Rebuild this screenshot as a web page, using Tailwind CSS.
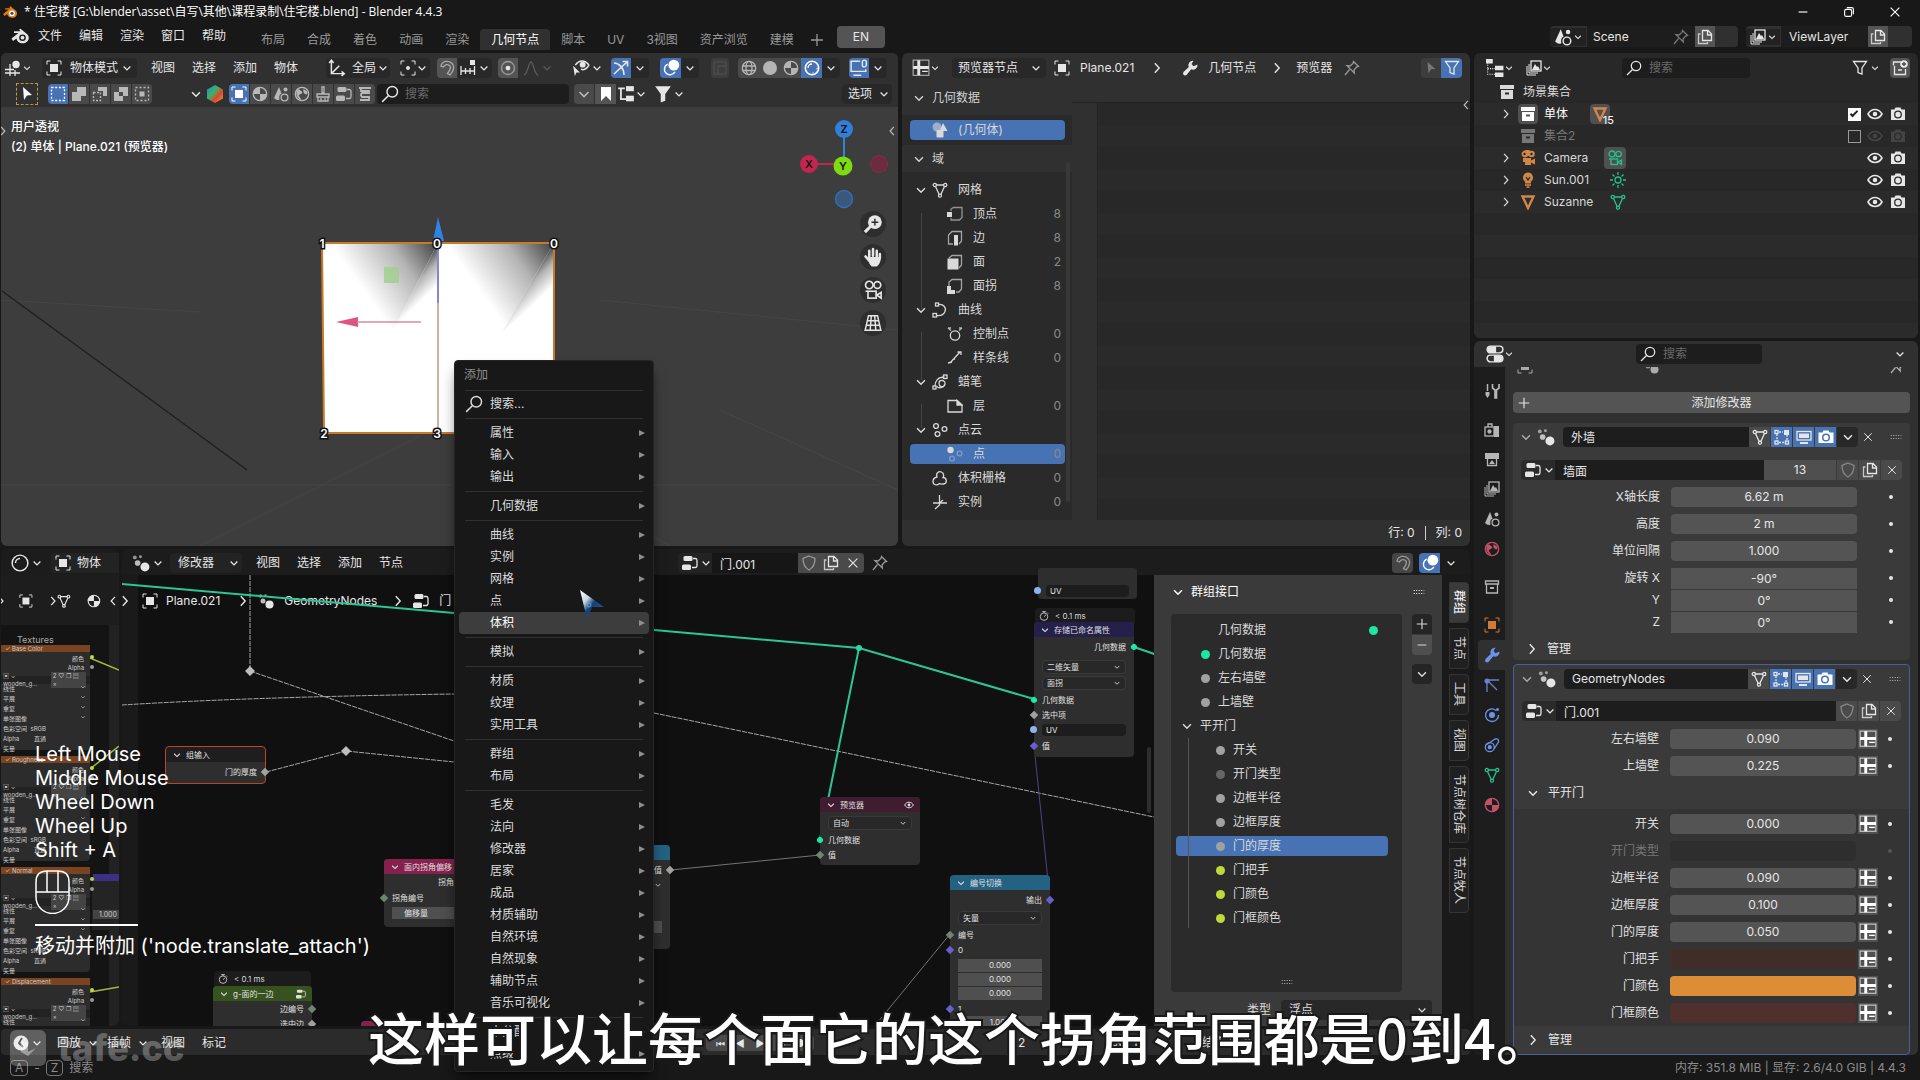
<!DOCTYPE html>
<html lang="zh-CN">
<head>
<meta charset="utf-8">
<title>住宅楼.blend - Blender 4.4.3</title>
<script src="https://cdn.jsdelivr.net/npm/@tailwindcss/browser@4"></script>
</head>
<body class="relative flex h-screen flex-col overflow-hidden bg-[#181818] font-[family-name:Inter,'Noto_Sans_CJK_SC',sans-serif] text-xs leading-4 text-[#d9d9d9] [&_use]:fill-none [&_use]:stroke-current [&_use]:stroke-[1.3px]">

<!-- icon sprite: line icons take their stroke from the use element -->
<svg class="hidden" aria-hidden="true">
<symbol id="chev" viewBox="0 0 16 16"><path d="M3.500 6l4.500 4.500L12.500 6" stroke-width="1.700"/></symbol>
<symbol id="right" viewBox="0 0 16 16"><path d="M5.500 2.500L10.500 8l-5 5.500" stroke-width="1.600"/></symbol>
<symbol id="left" viewBox="0 0 16 16"><path d="M10.500 2.500L5.500 8l5 5.500" stroke-width="1.600"/></symbol>
<symbol id="plus" viewBox="0 0 16 16"><path d="M8 2v12M2 8h12"/></symbol>
<symbol id="minus" viewBox="0 0 16 16"><path d="M3 8h10"/></symbol>
<symbol id="x" viewBox="0 0 16 16"><path d="M3 3l10 10M13 3L3 13"/></symbol>
<symbol id="restore" viewBox="0 0 16 16"><rect x="3" y="5" width="8" height="8" rx="2"/><path d="M5.500 3H11a2 2 0 012 2v5.500"/></symbol>
<symbol id="search" viewBox="0 0 16 16"><circle cx="10" cy="6" r="4.700"/><path d="M6.500 9.500L1 15"/></symbol>
<symbol id="obj" viewBox="0 0 16 16"><rect x="4" y="4" width="8" height="8" fill="currentColor" stroke="none"/><path d="M1 4.500V1h3.500M11.500 1H15v3.500M15 11.500V15h-3.500M4.500 15H1v-3.500" stroke-width="1"/></symbol>
<symbol id="ed3d" viewBox="0 0 16 16"><circle cx="11" cy="4.500" r="3.700" fill="currentColor" stroke="none"/><path d="M5 4v12M0 9.500h9M0 13h15M10 10v6" /></symbol>
<symbol id="axes" viewBox="0 0 16 16"><path d="M3 1v12h11M3 13L10 6M1 3.500L3 1l2 2.500M12 11l2.500 2-2.500 2"/></symbol>
<symbol id="pivot" viewBox="0 0 16 16"><circle cx="8" cy="8" r="1.300" fill="currentColor"/><path d="M1 4.500V1h3.500M11.500 1H15v3.500M15 11.500V15h-3.500M4.500 15H1v-3.500" stroke-width="1"/></symbol>
<symbol id="magnet" viewBox="0 0 16 16"><path d="M2 6C3 1 10-.5 13.500 4c2 3 1 7-2.500 11l-2.500-1.500C11.500 9.500 12 7.500 11 6 9 3.500 5.500 4.500 4.500 7z"/></symbol>
<symbol id="snap" viewBox="0 0 16 16"><path d="M1 6v9M1 11h14M5.500 8v6M10 8v6M14.500 6v9"/><rect x="10" y="0" width="5" height="5" fill="currentColor" stroke="none"/></symbol>
<symbol id="prop" viewBox="0 0 16 16"><circle cx="8" cy="8" r="6.500" opacity=".5"/><circle cx="8" cy="8" r="1.700" fill="currentColor"/></symbol>
<symbol id="bell" viewBox="0 0 16 16"><path d="M1 15C5 14 5.500 2 8 2s3 12 7 13"/></symbol>
<symbol id="eyecur" viewBox="0 0 16 16"><path d="M3 5.500C6 .5 12 .5 15 5.500c-3 5-6 4-7 3.500"/><circle cx="9.500" cy="5" r="2" fill="currentColor"/><path d="M1 6l6 6H4l-1.500 3z" fill="currentColor" stroke="none"/></symbol>
<symbol id="gizmo" viewBox="0 0 16 16"><path d="M1 14L14 2M9.500 1.500H14.500V6.500M1 3c5 0 10 5 10 12" stroke-width="1.600"/></symbol>
<symbol id="overlay" viewBox="0 0 16 16"><circle cx="10.500" cy="5.500" r="4.800" fill="currentColor" stroke="none"/><path d="M5 4.500A5 5 0 1011.500 11.500"/></symbol>
<symbol id="xray" viewBox="0 0 16 16"><rect x="2" y="2" width="12" height="12"/><path d="M6 6h8M6 6v8"/></symbol>
<symbol id="wire" viewBox="0 0 16 16"><circle cx="8" cy="8" r="6.700"/><ellipse cx="8" cy="8" rx="3" ry="6.700"/><path d="M1.500 6h13M1.500 10.500h13"/></symbol>
<symbol id="solid" viewBox="0 0 16 16"><circle cx="8" cy="8" r="7" fill="currentColor" stroke="none"/></symbol>
<symbol id="matprev" viewBox="0 0 16 16"><circle cx="8" cy="8" r="6.700"/><path d="M8 1.300A6.700 6.700 0 001.300 8H8zM8 8v6.700A6.700 6.700 0 0014.700 8z" fill="currentColor" stroke="none"/></symbol>
<symbol id="rend" viewBox="0 0 16 16"><circle cx="8" cy="8" r="6.700" stroke-width="1.600"/><path d="M4 8a4 4 0 014-4" /><path d="M12 12l1 1M13.500 8.500h-1M9 13.500v-1"/></symbol>
<symbol id="monlink" viewBox="0 0 16 16"><path d="M9 2H1v9h13V9M3 14.500h7"/><rect x="11" y="1" width="3.500" height="6" rx="1.700"/></symbol>
<symbol id="cursor" viewBox="0 0 16 16"><path d="M4 1l9 8-5 .5L5 14z" fill="currentColor" stroke="none"/></symbol>
<symbol id="selnew" viewBox="0 0 16 16"><rect x="1.500" y="1.500" width="13" height="13" stroke-dasharray="2 1.700"/></symbol>
<symbol id="seladd" viewBox="0 0 16 16"><path d="M6 1h9v9h-5v5H1V6h5z" fill="currentColor" stroke="none"/></symbol>
<symbol id="selsub" viewBox="0 0 16 16"><path d="M6 1h9v9h-4V5H6z" fill="currentColor" stroke="none"/><path d="M1.500 6.500h7v8h-7z" stroke-dasharray="2 1.500"/></symbol>
<symbol id="selinv" viewBox="0 0 16 16"><path d="M6 1h9v9h-5v5H1V6h5zM6 6v4h4V6z" fill="currentColor" fill-rule="evenodd" stroke="none"/></symbol>
<symbol id="selint" viewBox="0 0 16 16"><rect x="5.500" y="5.500" width="5" height="5" fill="currentColor" stroke="none"/><rect x="1.500" y="1.500" width="13" height="13" stroke-dasharray="2 2"/></symbol>
<symbol id="scene" viewBox="0 0 16 16"><path d="M6 1L1 12q3 3 5.500 1.500Q5.500 9 8.500 7.500z" fill="currentColor" stroke="none"/><circle cx="11.500" cy="11.500" r="3.400"/><circle cx="12.500" cy="3.500" r="2" fill="currentColor" stroke="none"/></symbol>
<symbol id="world" viewBox="0 0 16 16"><circle cx="8" cy="8" r="6.700"/><path d="M3 4c2-1 3 0 4 1s2 0 1 2-4 1-3 3 2 2 2 4C4 13 1 9 3 4zM10 2c0 2 1 2 3 3 1 3 0 4-2 3s-2-4-1-6z" fill="currentColor" stroke="none"/></symbol>
<symbol id="brush" viewBox="0 0 16 16"><path d="M7 1h2v6h-2zM2 8h12v3H2zM3 11v4h10v-4M6 12v3M10 12v3"/></symbol>
<symbol id="nodetree" viewBox="0 0 16 16"><rect x="1.500" y="1" width="9" height="5" rx="1.500" fill="currentColor" stroke="none"/><rect x="0" y="9.500" width="9" height="5.500" rx="1.500" fill="currentColor" stroke="none"/><path d="M11 3.500h2.500q1.500 0 1.500 2v5q0 2-1.500 2H10"/></symbol>
<symbol id="stack" viewBox="0 0 16 16"><path d="M2 2h12M4 2v3h8v2H5q-2 2 0 4h7v3H3" stroke-width="1.800"/></symbol>
<symbol id="bookmark" viewBox="0 0 16 16"><path d="M3 1h10v14l-5-5-5 5z" fill="currentColor" stroke="none"/></symbol>
<symbol id="tree" viewBox="0 0 16 16"><path d="M1 3h6M3.500 3v9.500H8" stroke-width="1.600"/><rect x="8" y="1" width="7" height="4.500" fill="currentColor" stroke="none"/><rect x="8" y="9.500" width="7" height="5" fill="currentColor" stroke="none"/></symbol>
<symbol id="outl" viewBox="0 0 16 16"><path d="M1.500 3v10.500H9M1.500 8.500H9" stroke-width="1" stroke-dasharray="1 1"/><rect x="0" y="0" width="6" height="4" fill="currentColor" stroke="none"/><rect x="8" y="6" width="7.500" height="4" fill="currentColor" stroke="none"/><rect x="8" y="12" width="7.500" height="4" fill="currentColor" stroke="none"/></symbol>
<symbol id="funnel" viewBox="0 0 16 16"><path d="M1 1h14L10 8v6l-4 1.500V8z" fill="currentColor" stroke="none"/></symbol>
<symbol id="funnelo" viewBox="0 0 16 16"><path d="M1.500 1.500h13L10 8v6l-4-1.500V8z"/></symbol>
<symbol id="zoom" viewBox="0 0 16 16"><circle cx="9.500" cy="6.500" r="5.500" fill="currentColor" stroke="none"/><path d="M6 10l-4.500 4.500" stroke-width="2.500"/><path d="M9.500 3.800v5.400M6.800 6.500h5.400" stroke="#2b2b2b" stroke-width="1.200"/></symbol>
<symbol id="hand" viewBox="0 0 16 16"><path d="M5 8V3M8 7V1.500M11 8V3M13.500 9V5.500M2 7.500L5 11" stroke-width="2" stroke-linecap="round"/><path d="M4 8h10.300c0 4-1.500 6.500-3.300 7.500H7C5 14 4 11 4 8z" fill="currentColor" stroke="none"/></symbol>
<symbol id="cam" viewBox="0 0 16 16"><circle cx="5" cy="4" r="3"/><circle cx="11.500" cy="4" r="2.700"/><rect x="4" y="9" width="6.500" height="5.500"/><path d="M2 9h2M11 12l3.500-2v4.500z" /></symbol>
<symbol id="camf" viewBox="0 0 16 16"><path d="M5 .5a3.500 3.500 0 103 5.500A3.300 3.300 0 105 .5zM3 8h8v2.500L15 8.500v6l-4-2V15H5v-3H3z" fill="currentColor" stroke="none"/><circle cx="11.500" cy="4" r="3.300" fill="currentColor" stroke="none"/><circle cx="4.500" cy="4" r="1.200" fill="#282828" stroke="none"/><circle cx="11.500" cy="4" r="1.200" fill="#282828" stroke="none"/></symbol>
<symbol id="gridp" viewBox="0 0 16 16"><path d="M4 1.500h8l3 13H1zM6.500 1.500l-1 13M9.500 1.500l1 13M3 6h10M2 10h12"/></symbol>
<symbol id="sheet" viewBox="0 0 16 16"><rect x="1" y="1" width="14" height="13.500" stroke-width="1" opacity=".7"/><path d="M6 1v13.500M1 7.500h14" stroke-width="2.600"/><path d="M9 11h5" /></symbol>
<symbol id="wrench" viewBox="0 0 16 16"><path d="M15.500 4.500a4.500 4.500 0 01-6.300 4.700L4.500 15q-2 1-3-.2T1.500 12l5.300-5A4.500 4.500 0 0111.500.7L9.500 4l2 2.300z" fill="currentColor" stroke="none"/></symbol>
<symbol id="pin" viewBox="0 0 16 16"><path d="M9.500 1.500l5 5-2 .5-2.500 3 .3 3L3 5.700l3 .3 3-2.500zM5.500 9.500l-4.500 5.500"/></symbol>
<symbol id="geo" viewBox="0 0 16 16"><circle cx="5" cy="5" r="4.500" fill="currentColor" opacity=".6" stroke="none"/><path d="M11 1l4.500 8h-8z" fill="currentColor" stroke="none"/><rect x="4.500" y="8" width="7" height="7.500" rx="1" fill="currentColor" stroke="none"/></symbol>
<symbol id="mesh" viewBox="0 0 16 16"><path d="M4 3h8M3.500 4.500l3.700 8M12.500 4.500l-3.700 8"/><circle cx="2.800" cy="3" r="1.600"/><circle cx="13.200" cy="3" r="1.600"/><circle cx="8" cy="13.700" r="1.500"/></symbol>
<symbol id="vert" viewBox="0 0 16 16"><path d="M4 5V3l2.500-1.500H15v10L12.500 14H4v-2" opacity=".6"/><rect x="0" y="6" width="5" height="5" fill="currentColor" stroke="none"/></symbol>
<symbol id="edge" viewBox="0 0 16 16"><path d="M6 14H1.500V5L5 1.500h9.500V11L12 14" opacity=".7"/><rect x="7" y="5" width="4" height="10.500" fill="currentColor" stroke="none"/></symbol>
<symbol id="face" viewBox="0 0 16 16"><path d="M2 4l3-2.500h9.500V11L12 14" opacity=".7"/><rect x="0.500" y="4.500" width="11" height="11" fill="currentColor" stroke="none"/></symbol>
<symbol id="corner" viewBox="0 0 16 16"><path d="M2 8V4l3-2.500h9.500V11L12 14H9" opacity=".7"/><path d="M0 8h4v4h4v4H0z" fill="currentColor" stroke="none"/></symbol>
<symbol id="curve" viewBox="0 0 16 16"><path d="M6.500 2.500C12 2 14.500 6 13 9.500S8 14 4.500 13.500"/><rect x="3.500" y="1" width="3" height="3"/><rect x="1" y="11.500" width="3.500" height="3.500"/></symbol>
<symbol id="cpt" viewBox="0 0 16 16"><circle cx="8" cy="9.500" r="4.700"/><path d="M4 4.500L1 2M12 4.500L15 2M1 2h3M12 2h3" opacity=".8"/></symbol>
<symbol id="spline" viewBox="0 0 16 16"><path d="M3 13L13 2M10.500 2H14v3M1 13l4-1M8 9l-3 1"/></symbol>
<symbol id="gp" viewBox="0 0 16 16"><path d="M3 12C3 7 6 3 12.500 3M5 12c0 3 7 2 8-2s-6-5-6-1 3 4 5 3"/><rect x="11.500" y="1" width="3.500" height="3.500"/><rect x="1" y="12" width="3" height="3"/></symbol>
<symbol id="layer" viewBox="0 0 16 16"><path d="M1 2.500h9L15 7v7H1z"/><path d="M10 2.500V7h5z" fill="currentColor"/></symbol>
<symbol id="cloud" viewBox="0 0 16 16"><circle cx="4" cy="4" r="2.400"/><circle cx="12.500" cy="7" r="2.400"/><circle cx="5.500" cy="12" r="2.400"/></symbol>
<symbol id="cloudp" viewBox="0 0 16 16"><circle cx="3.500" cy="4" r="3.200" fill="currentColor" stroke="none"/><g opacity=".4"><circle cx="12.500" cy="7.500" r="2.400"/><circle cx="5" cy="12.500" r="2.400"/></g></symbol>
<symbol id="vol" viewBox="0 0 16 16"><path d="M5 7C3.500 3 7 .8 9.500 2s2.500 4 1.500 5.500c4 0 4.500 6 .5 6.500-2 .3-3 .3-4-.5C5 16 1 15 1 11.500 1 9 3 7.500 5 7z"/></symbol>
<symbol id="inst" viewBox="0 0 16 16"><path d="M7.500 1v10L3 15M7.500 9H15M1 9h6.500M7.500 9L11 6"/></symbol>
<symbol id="vlayer" viewBox="0 0 16 16"><rect x="5" y="1" width="10" height="10"/><path d="M6 10l3-6 2 3 1-1 2 4z" fill="currentColor" stroke="none"/><path d="M3 4v9h9M1 6v9h9" stroke-width="1"/></symbol>
<symbol id="copy" viewBox="0 0 16 16"><path d="M5.500 1.500h5.500l3.500 3.500v6.500h-9zM10.500 1.500V6h4"/><path d="M3.500 5H1.500v9.500h9V13" opacity=".8"/></symbol>
<symbol id="coll" viewBox="0 0 16 16"><rect x="1" y="1" width="14" height="4" fill="currentColor" stroke="none"/><path d="M2 6h12v9H2zM6 8.500v2h4v-2z" fill="currentColor" fill-rule="evenodd" stroke="none"/></symbol>
<symbol id="collo" viewBox="0 0 16 16"><path d="M1.500 2h13v3h-13zM2.500 5v9h11V5"/><path d="M6 9h4" stroke-width="2"/></symbol>
<symbol id="newcoll" viewBox="0 0 16 16"><path d="M9 2H1.500v3.500M2.500 6v8.500h11V9M6 10h4"/><circle cx="12" cy="4" r="3.800" fill="currentColor" stroke="none"/><path d="M12 2v4M10 4h4" stroke="#444"/></symbol>
<symbol id="eye" viewBox="0 0 16 16"><path d="M1 8c3.500-6 10.500-6 14 0-3.500 6-10.500 6-14 0z" stroke-width="1.600"/><circle cx="8" cy="8" r="2.300" fill="currentColor" stroke="none"/></symbol>
<symbol id="photo" viewBox="0 0 16 16"><path d="M1 3.500h3.500L5.500 1.500h5l1 2H15V14H1z" fill="currentColor" stroke="none"/><circle cx="8" cy="8.500" r="3.300" stroke="#2b2b2b"/></symbol>
<symbol id="photob" viewBox="0 0 16 16"><path d="M.5 3.500h4L5.500 1.500h5l1 2h4V14H.5z" fill="currentColor" stroke="none"/><circle cx="8" cy="8.500" r="3.300" stroke="#4772b3" stroke-width="1.500"/></symbol>
<symbol id="bulb" viewBox="0 0 16 16"><path d="M8 .5a5 5 0 00-3 9v2h6v-2a5 5 0 00-3-9z" fill="currentColor" stroke="none"/><path d="M5 13h6M6.500 15h3"/><path d="M6 5l2 3 2-3" stroke="#282828"/></symbol>
<symbol id="tri" viewBox="0 0 16 16"><path d="M2.500 2.500h11L8 14z" stroke-width="2.400"/></symbol>
<symbol id="sun" viewBox="0 0 16 16"><circle cx="8" cy="8" r="3"/><path d="M8 0v3M8 13v3M0 8h3M13 8h3M2.500 2.500l2 2M11.500 11.500l2 2M2.500 13.500l2-2M11.500 4.500l2-2"/></symbol>
<symbol id="props" viewBox="0 0 16 16"><rect x="1" y="1" width="14" height="6" rx="3"/><rect x="1" y="9" width="14" height="6" rx="3"/><path d="M4 1h5v6H4q-3-1-3-3t3-3zM7 9h5q3 1 3 3t-3 3H7z" fill="currentColor" stroke="none"/></symbol>
<symbol id="tool" viewBox="0 0 16 16"><path d="M3.500 1v7" stroke-width="1.500"/><path d="M1.500 9h4v3l-2 3-2-3z" fill="currentColor" stroke="none"/><path d="M8.500 1v4l2.500 2v8h1.500V7L15 5V1" stroke-width="1.700"/></symbol>
<symbol id="render" viewBox="0 0 16 16"><rect x="1" y="5" width="9" height="9"/><path d="M4 5V2h4v3"/><path d="M10 4h5v11h-5z" fill="currentColor" stroke="none"/><circle cx="5.500" cy="9.500" r="1.500" fill="currentColor"/></symbol>
<symbol id="output" viewBox="0 0 16 16"><path d="M1 2h14v6H1z" fill="currentColor" stroke="none"/><path d="M3.500 8v6.500h9V8" /><path d="M5 13l3-4 3 4z" fill="currentColor" stroke="none"/></symbol>
<symbol id="parts" viewBox="0 0 16 16"><path d="M3 15V3h12M3 3l10 10"/><circle cx="3" cy="4" r="2.500" fill="currentColor" stroke="none"/></symbol>
<symbol id="phys" viewBox="0 0 16 16"><path d="M12 3.500A6.300 6.300 0 108 14.500 6.300 6.300 0 0014.500 8"/><circle cx="8" cy="8" r="3" fill="currentColor" stroke="none"/><circle cx="13.500" cy="2.500" r="1.500" fill="currentColor" stroke="none"/></symbol>
<symbol id="constr" viewBox="0 0 16 16"><path d="M2 8L11 2q4-1 3.500 3L10 12"/><circle cx="5.800" cy="10.200" r="4.500"/><circle cx="5.800" cy="10.200" r="1.500" fill="currentColor"/></symbol>
<symbol id="mods" viewBox="0 0 16 16"><circle cx="11.500" cy="11.500" r="4" fill="currentColor" stroke="none"/><circle cx="5" cy="8" r="2.500" fill="currentColor" opacity=".8" stroke="none"/><circle cx="2.500" cy="3" r="1.700" fill="currentColor" opacity=".6" stroke="none"/><circle cx="7.500" cy="2.500" r="1.300" fill="currentColor" opacity=".6" stroke="none"/></symbol>
<symbol id="editm" viewBox="0 0 16 16"><path d="M3 5v7M5 13.500h6M13 11V6M5 3h4" stroke-dasharray="2 1.200"/><rect x="1" y="1.500" width="3" height="3"/><rect x="1" y="12" width="3" height="3"/><rect x="11.500" y="12" width="3" height="3"/><rect x="10" y="1" width="5" height="5" fill="currentColor" stroke="none"/></symbol>
<symbol id="mon" viewBox="0 0 16 16"><rect x="1" y="2.500" width="14" height="8.500"/><rect x="3" y="4.500" width="10" height="4.500" fill="currentColor" stroke="none"/><path d="M4 14h8" stroke-width="2"/></symbol>
<symbol id="shield" viewBox="0 0 16 16"><path d="M8 1l6 2.500c0 6-1.500 9-6 11.500-4.500-2.500-6-5.500-6-11.500z"/></symbol>
<symbol id="grip" viewBox="0 0 16 16"><path d="M1 6h14M1 10h14" stroke-dasharray="1.300 2" stroke-width="1.400"/></symbol>
<symbol id="sphere" viewBox="0 0 16 16"><circle cx="8" cy="8" r="7"/><path d="M4 8a4 4 0 014-4"/></symbol>
<symbol id="clock" viewBox="0 0 16 16"><circle cx="8" cy="8" r="7.500" fill="currentColor" stroke="none"/><path d="M9 3L6 8l4 4" stroke="#222" stroke-width="1.800"/></symbol>
<symbol id="timer" viewBox="0 0 16 16"><circle cx="8" cy="9" r="6"/><path d="M5 1h6M8 1v2M8 9l3-2.500M13 2.500l1.500 1.500"/></symbol>
<symbol id="blender" viewBox="0 0 20 16"><g stroke="none"><path d="M1.500 10.500L8.500 5H4V3.200h6.500L9 1.800 10.500.8l7 5.700a5.300 5.300 0 01-2 8.300c-4.500 1.600-8.500-.6-9-4.300L3 13z" fill="currentColor"/><circle cx="12.500" cy="9.700" r="3.300" fill="#181818"/><circle cx="12.500" cy="9.700" r="1.900" fill="currentColor"/></g></symbol>
<symbol id="blenderc" viewBox="0 0 20 16"><g stroke="none"><path d="M1.500 10.500L8.500 5H4V3.200h6.500L9 1.800 10.500.8l7 5.700a5.300 5.300 0 01-2 8.300c-4.500 1.600-8.500-.6-9-4.300L3 13z" fill="#e87d0d"/><circle cx="12.500" cy="9.700" r="3.600" fill="#fff"/><circle cx="12.500" cy="9.700" r="2" fill="#265787"/></g></symbol>
</svg>

<!-- window title -->
<header class="flex h-6 shrink-0 items-center">
  <svg class="ml-0.5 h-3.5 w-4"><use href="#blenderc"/></svg>
  <span class="ml-1.5 font-[family-name:'Open_Sans','Noto_Sans_CJK_SC',sans-serif] text-white">* 住宅楼 [G:\blender\asset\自写\其他\课程录制\住宅楼.blend] - Blender 4.4.3</span>
  <button class="mr-8 ml-auto text-white" aria-label="最小化"><svg class="size-3.5"><use href="#minus"/></svg></button>
  <button class="mr-8 text-white" aria-label="还原"><svg class="size-3.5"><use href="#restore"/></svg></button>
  <button class="mr-4.5 text-white" aria-label="关闭"><svg class="size-3.5"><use href="#x"/></svg></button>
</header>

<!-- top bar -->
<nav class="flex h-[29px] shrink-0 items-start">
  <div class="flex h-6 items-center gap-[17px] text-[#e6e6e6]">
    <svg class="-mr-[9px] ml-2.5 h-4 w-5"><use href="#blender"/></svg>
    <button>文件</button><button>编辑</button><button>渲染</button><button>窗口</button><button>帮助</button>
  </div>
  <div class="mt-[5px] ml-6 flex h-[21px] text-[#989898] *:px-[11px]">
    <button>布局</button><button>合成</button><button>着色</button><button>动画</button><button>渲染</button>
    <button class="rounded-t bg-[#303030] text-white">几何节点</button>
    <button>脚本</button><button>UV</button><button>3视图</button><button>资产浏览</button><button>建模</button>
  </div>
  <button class="mt-2 ml-1 text-[#989898]" aria-label="添加工作区"><svg class="size-4"><use href="#plus"/></svg></button>
  <button class="mt-0.5 ml-3 h-[22px] w-12 rounded bg-[#545454] text-[#e6e6e6]">EN</button>
  <div class="mt-0.5 mr-2 ml-auto flex h-[21px] items-center rounded bg-[#303030] text-[#e6e6e6]">
    <button class="flex w-9 items-center gap-px bg-[#222] pl-1" aria-label="场景"><svg class="size-4.5"><use href="#scene"/></svg><svg class="size-2.5"><use href="#chev"/></svg></button>
    <input class="ml-px h-[21px] w-[86px] bg-[#1d1d1d] pl-1.5" value="Scene" aria-label="场景名称">
    <button class="flex h-[21px] w-[22px] items-center bg-[#1d1d1d] text-[#777]" aria-label="固定"><svg class="size-4"><use href="#pin"/></svg></button>
    <button class="flex h-[21px] w-[20px] items-center justify-center bg-[#545454]" aria-label="新建场景"><svg class="size-4"><use href="#copy"/></svg></button>
    <span class="w-[23px]"></span>
  </div>
  <div class="mt-0.5 mr-2 flex h-[21px] items-center rounded bg-[#303030] text-[#e6e6e6]">
    <button class="flex w-[34px] items-center gap-px bg-[#222] pl-1" aria-label="视图层"><svg class="size-4"><use href="#vlayer"/></svg><svg class="size-2.5"><use href="#chev"/></svg></button>
    <input class="ml-px h-[21px] w-[87px] bg-[#1d1d1d] pl-2" value="ViewLayer" aria-label="视图层名称">
    <button class="flex h-[21px] w-[20px] items-center justify-center bg-[#545454]" aria-label="新建视图层"><svg class="size-4"><use href="#copy"/></svg></button>
    <span class="w-[24px]"></span>
  </div>
</nav>

<main class="flex min-h-0 flex-1 gap-1 pr-0.5 pb-px pl-px">
 <div class="flex min-w-0 flex-1 flex-col gap-[3px]">
  <div class="flex min-h-0 flex-1 gap-1">

   <!-- 3D viewport -->
   <section class="relative min-w-0 flex-1 overflow-hidden rounded-md bg-[#3d3d3d]" aria-label="3D 视图">
    <svg class="absolute top-0 left-0" width="897" height="493" viewBox="1 53 897 493">
      <defs>
        <linearGradient id="ga" gradientUnits="userSpaceOnUse" x1="438" y1="243" x2="366" y2="294"><stop offset="0" stop-color="#3f3f3f"/><stop offset=".45" stop-color="#b4b4b4"/><stop offset="1" stop-color="#fff"/></linearGradient>
        <linearGradient id="gb" gradientUnits="userSpaceOnUse" x1="438" y1="243" x2="459" y2="265"><stop offset="0" stop-color="#3f3f3f"/><stop offset=".45" stop-color="#b4b4b4"/><stop offset="1" stop-color="#fff"/></linearGradient>
      </defs>
      <g stroke="#464646" fill="none"><path d="M1 300L200 312M600 300L898 330M650 485H880M720 410L898 490M560 485l110 61M1 485h450M200 546L420 436"/></g>
      <path d="M2 291L247 470" stroke="#1f1f1f" stroke-width="1.500"/>
      <rect x="323" y="243" width="231" height="190" fill="#fff"/>
      <path d="M438 243H330L392 332z" fill="url(#ga)"/><path d="M438 243L392 332L438 287z" fill="url(#gb)"/>
      <g transform="translate(116 0)"><path d="M438 243H330L386 332z" fill="url(#ga)"/><path d="M438 243L386 332L438 287z" fill="url(#gb)"/></g>
      <path d="M322 243H554V433H324z" fill="none" stroke="#c87a28" stroke-width="2"/>
      <path d="M438 243v60" stroke="#8886cf" stroke-width="2"/><path d="M438 303v130" stroke="#b89a80" stroke-width="1.500"/>
      <path d="M438 217l6 24h-11z" fill="#2f83e3"/>
      <rect x="384" y="267" width="15" height="16" fill="#9fce90" opacity=".8"/>
      <path d="M336 322l22-5v10z" fill="#e0557f"/><path d="M357 322h64" stroke="#d98ba3" stroke-width="1.500"/>
      <g font-size="12" font-weight="600" fill="#fff" stroke="#111" stroke-width="3" paint-order="stroke" text-anchor="middle"><text x="322" y="248">1</text><text x="437" y="248">0</text><text x="554" y="248">0</text><text x="324" y="438">2</text><text x="437" y="438">3</text></g>
      <path d="M844 135v30" stroke="#2f83e3" stroke-width="2"/><path d="M815 164h29" stroke="#c4254f" stroke-width="2"/>
      <circle cx="844" cy="129" r="9" fill="#2f7fdb"/><circle cx="809" cy="164" r="9" fill="#c4254f"/><circle cx="843" cy="166" r="9.500" fill="#7ddb10"/>
      <circle cx="879" cy="164" r="8.500" fill="#6b2c40" stroke="#8e2846"/><circle cx="844" cy="199" r="8.500" fill="#39587c" stroke="#2f6fb8" stroke-width="1.500"/>
      <g font-size="11" font-weight="600" fill="#151515" text-anchor="middle"><text x="844" y="133">Z</text><text x="809" y="168">X</text><text x="843" y="170">Y</text></g>
    </svg>
    <div class="relative flex h-[54px] flex-col bg-[#303030]">
      <div class="flex h-7 items-center pt-0.5 text-[#e6e6e6]">
        <button class="ml-1 flex w-[29px] items-center gap-px" aria-label="编辑器类型"><svg class="size-4"><use href="#ed3d"/></svg><svg class="size-2.5"><use href="#chev"/></svg></button>
        <label class="relative ml-2 flex h-5 w-[95px] items-center rounded bg-[#282828]"><svg class="ml-1 size-4"><use href="#obj"/></svg><select class="absolute inset-0 appearance-none pl-7" aria-label="模式"><option>物体模式</option></select><svg class="absolute right-1 size-3"><use href="#chev"/></svg></label>
        <button class="ml-3.5">视图</button><button class="ml-[17px]">选择</button><button class="ml-[17px]">添加</button><button class="ml-[17px]">物体</button>
        <button class="ml-7 flex h-5 w-16 items-center rounded bg-[#282828] pl-0.5"><svg class="size-4.5"><use href="#axes"/></svg><span class="ml-1.5">全局</span><svg class="ml-px size-3"><use href="#chev"/></svg></button>
        <button class="ml-2.5 flex h-5 w-[30px] items-center rounded bg-[#282828]" aria-label="轴心点"><svg class="size-4"><use href="#pivot"/></svg><svg class="size-3"><use href="#chev"/></svg></button>
        <button class="ml-[7px] flex size-5 items-center justify-center rounded-l bg-[#545454] text-[#aaa]" aria-label="吸附"><svg class="size-4"><use href="#magnet"/></svg></button>
        <button class="ml-px flex h-5 w-[34px] items-center gap-0.5 rounded-r bg-[#282828] pl-0.5" aria-label="吸附至"><svg class="size-4"><use href="#snap"/></svg><svg class="size-3"><use href="#chev"/></svg></button>
        <button class="ml-1.5 flex size-5 items-center justify-center rounded-l bg-[#545454]" aria-label="衰减编辑"><svg class="size-4"><use href="#prop"/></svg></button>
        <button class="ml-px flex h-5 w-[34px] items-center gap-0.5 rounded-r pl-1 text-[#5a5a5a]" aria-label="衰减类型"><svg class="size-4"><use href="#bell"/></svg><svg class="size-3"><use href="#chev"/></svg></button>
        <button class="ml-[19px] flex w-[34px] items-center gap-px" aria-label="可见性"><svg class="size-4.5"><use href="#eyecur"/></svg><svg class="size-3"><use href="#chev"/></svg></button>
        <button class="ml-[5px] flex size-5 items-center justify-center rounded-l bg-[#4772b3]" aria-label="Gizmo"><svg class="size-4"><use href="#gizmo"/></svg></button>
        <button class="flex h-5 w-[18px] items-center justify-center rounded-r bg-[#282828]" aria-label="Gizmo 选项"><svg class="size-3"><use href="#chev"/></svg></button>
        <button class="ml-[11px] flex h-5 w-[21px] items-center justify-center rounded-l bg-[#4772b3]" aria-label="叠加层"><svg class="size-4.5 text-white"><use href="#overlay"/></svg></button>
        <button class="flex h-5 w-[18px] items-center justify-center rounded-r bg-[#282828]" aria-label="叠加层选项"><svg class="size-3"><use href="#chev"/></svg></button>
        <button class="ml-3 flex h-5 w-[18px] items-center justify-center rounded bg-[#3d3d3d] text-[#4d4d4d]" aria-label="透视模式"><svg class="size-4"><use href="#xray"/></svg></button>
        <div class="ml-[9px] flex overflow-hidden rounded-l text-[#b5b5b5]">
          <button class="flex h-5 w-[21px] items-center justify-center bg-[#4a4a4a]" aria-label="线框"><svg class="size-4"><use href="#wire"/></svg></button>
          <button class="flex h-5 w-[21px] items-center justify-center bg-[#4a4a4a]" aria-label="实体"><svg class="size-4"><use href="#solid"/></svg></button>
          <button class="flex h-5 w-[21px] items-center justify-center bg-[#4a4a4a]" aria-label="材质预览"><svg class="size-4"><use href="#matprev"/></svg></button>
          <button class="flex h-5 w-[21px] items-center justify-center bg-[#4772b3] text-white" aria-label="渲染"><svg class="size-4"><use href="#rend"/></svg></button>
        </div>
        <button class="flex h-5 w-[18px] items-center justify-center rounded-r bg-[#282828]" aria-label="着色选项"><svg class="size-3"><use href="#chev"/></svg></button>
        <button class="ml-[9px] flex size-5 items-center justify-center rounded-l bg-[#4772b3]" aria-label="视图同步"><svg class="size-4.5"><use href="#monlink"/></svg></button>
        <button class="flex h-5 w-[18px] items-center justify-center rounded-r bg-[#282828]" aria-label="同步选项"><svg class="size-3"><use href="#chev"/></svg></button>
      </div>
      <div class="flex h-[25px] items-center text-[#b8b8b8]">
        <button class="ml-[15px] flex size-5.5 items-center justify-center border border-dashed border-[#b99a3a] text-white" aria-label="框选"><svg class="size-4"><use href="#cursor"/></svg></button>
        <div class="ml-2.5 flex gap-px">
          <button class="flex size-5 items-center justify-center rounded-l bg-[#4772b3] text-white" aria-label="设置"><svg class="size-4"><use href="#selnew"/></svg></button>
          <button class="flex size-5 items-center justify-center bg-[#4a4a4a]" aria-label="扩展"><svg class="size-4"><use href="#seladd"/></svg></button>
          <button class="flex size-5 items-center justify-center bg-[#4a4a4a]" aria-label="减去"><svg class="size-4"><use href="#selsub"/></svg></button>
          <button class="flex size-5 items-center justify-center bg-[#4a4a4a]" aria-label="反转"><svg class="size-4"><use href="#selinv"/></svg></button>
          <button class="flex size-5 items-center justify-center rounded-r bg-[#4a4a4a]" aria-label="相交"><svg class="size-4"><use href="#selint"/></svg></button>
        </div>
        <svg class="ml-[37px] size-3.5 text-[#e6e6e6]"><use href="#chev"/></svg>
        <svg class="ml-0.5 size-5" viewBox="0 0 20 20"><defs><linearGradient id="cube" x1="0" y1="0" x2="1" y2="1"><stop offset="0" stop-color="#2f7fd8"/><stop offset=".4" stop-color="#35b56a"/><stop offset=".65" stop-color="#e0442e"/><stop offset="1" stop-color="#e8a13a"/></linearGradient></defs><path d="M10 1l8 4.500v9L10 19l-8-4.500v-9z" fill="url(#cube)"/></svg>
        <div class="ml-1 flex gap-px">
          <button class="flex size-5 items-center justify-center rounded-l bg-[#4772b3] text-white" aria-label="物体"><svg class="size-4"><use href="#obj"/></svg></button>
          <button class="flex size-5 items-center justify-center bg-[#4a4a4a]" aria-label="材质"><svg class="size-4"><use href="#matprev"/></svg></button>
          <button class="flex size-5 items-center justify-center bg-[#4a4a4a]" aria-label="场景"><svg class="size-4"><use href="#scene"/></svg></button>
          <button class="flex size-5 items-center justify-center bg-[#4a4a4a]" aria-label="世界"><svg class="size-4"><use href="#world"/></svg></button>
          <button class="flex size-5 items-center justify-center bg-[#4a4a4a]" aria-label="笔刷"><svg class="size-4"><use href="#brush"/></svg></button>
          <button class="flex size-5 items-center justify-center bg-[#4a4a4a]" aria-label="节点组"><svg class="size-4"><use href="#nodetree"/></svg></button>
          <button class="flex size-5 items-center justify-center rounded-r bg-[#4a4a4a]" aria-label="堆栈"><svg class="size-4"><use href="#stack"/></svg></button>
        </div>
        <label class="relative ml-0.5 flex h-5 w-[192px] items-center rounded bg-[#1d1d1d]"><svg class="ml-1 size-4.5 text-[#e6e6e6]"><use href="#search"/></svg><input class="absolute inset-0 pl-7 placeholder:text-[#6a6a6a]" placeholder="搜索" aria-label="搜索资产"></label>
        <button class="ml-[5px] flex size-5 items-center justify-center rounded-l bg-[#4a4a4a]" aria-label="折叠"><svg class="size-4"><use href="#chev"/></svg></button>
        <button class="ml-px flex h-5 w-[21px] items-center justify-center bg-[#545454] text-white" aria-label="书签"><svg class="size-4"><use href="#bookmark"/></svg></button>
        <button class="ml-px flex h-5 w-8 items-center text-[#e6e6e6]" aria-label="目录"><svg class="size-4.5"><use href="#tree"/></svg><svg class="size-3"><use href="#chev"/></svg></button>
        <button class="ml-[5px] flex h-5 w-8 items-center gap-px text-[#e6e6e6]" aria-label="过滤"><svg class="size-4.5"><use href="#funnel"/></svg><svg class="size-3"><use href="#chev"/></svg></button>
        <button class="mr-1.5 ml-auto flex h-5 w-[50px] items-center justify-end gap-1.5 rounded bg-[#282828] pr-0.5 text-[#e6e6e6]">选项<svg class="size-3"><use href="#chev"/></svg></button>
      </div>
    </div>
    <div class="relative mt-3 ml-2.5 flex flex-col gap-1 font-medium text-white">
      <span>用户透视</span><span>(2) 单体 | Plane.021 (预览器)</span>
    </div>
    <svg class="absolute top-[72px] right-0 size-3 text-[#bbb]"><use href="#left"/></svg>
    <svg class="absolute top-[72px] -left-1 size-3 text-[#bbb]"><use href="#right"/></svg>
    <div class="absolute top-[158px] right-3 flex flex-col gap-[7px] text-[#e6e6e6]">
      <button class="flex size-[26px] items-center justify-center rounded-full bg-[#2e2e2e]" aria-label="缩放"><svg class="size-5"><use href="#zoom"/></svg></button>
      <button class="flex size-[26px] items-center justify-center rounded-full bg-[#2e2e2e]" aria-label="平移"><svg class="size-5"><use href="#hand"/></svg></button>
      <button class="flex size-[26px] items-center justify-center rounded-full bg-[#2e2e2e]" aria-label="摄像机"><svg class="size-5"><use href="#cam"/></svg></button>
      <button class="flex size-[26px] items-center justify-center rounded-full bg-[#2e2e2e]" aria-label="透视"><svg class="size-4.5"><use href="#gridp"/></svg></button>
    </div>
   </section>

   <!-- spreadsheet -->
   <section class="flex w-[568px] flex-col overflow-hidden rounded-md bg-[#303030]" aria-label="电子表格">
    <div class="flex h-7 shrink-0 items-center pt-0.5 text-[#e6e6e6]">
      <button class="ml-2.5 flex items-center" aria-label="编辑器类型"><svg class="size-[18px]"><use href="#sheet"/></svg><svg class="size-2.5"><use href="#chev"/></svg></button>
      <label class="relative ml-3 flex h-5 w-[94px] items-center rounded bg-[#282828]"><select class="absolute inset-0 appearance-none pl-1.5" aria-label="数据来源"><option>预览器节点</option></select><svg class="absolute right-1 size-3"><use href="#chev"/></svg></label>
      <svg class="ml-2 size-4"><use href="#obj"/></svg><span class="ml-2.5">Plane.021</span>
      <svg class="ml-4 size-3.5"><use href="#right"/></svg><svg class="ml-4.5 size-4"><use href="#wrench"/></svg><span class="ml-2.5">几何节点</span>
      <svg class="ml-3.5 size-3.5"><use href="#right"/></svg><span class="ml-3">预览器</span><svg class="ml-3 size-4 text-[#999]"><use href="#pin"/></svg>
      <button class="ml-auto flex size-5 items-center justify-center rounded-l bg-[#3d3d3d] text-[#777]" aria-label="仅选中"><svg class="size-3.5"><use href="#cursor"/></svg></button>
      <button class="mr-2 flex h-5 w-[21px] items-center justify-center rounded-r bg-[#4772b3]" aria-label="过滤"><svg class="size-4"><use href="#funnelo"/></svg></button>
    </div>
    <div class="flex min-h-0 flex-1">
      <div id="domains" class="relative w-[170px] bg-[#2a2a2a]"></div>
      <div class="relative flex flex-1 flex-col">
        <div class="h-[22px] border-b border-[#222] bg-[#303030]"></div>
        <div class="flex flex-1"><div class="w-[26px] border-r border-[#222] bg-[#303030]"></div><div class="flex-1 bg-[repeating-linear-gradient(#282828_0_22px,#2a2a2a_22px_44px)]"></div></div>
        <svg class="absolute top-[18px] -right-0.5 size-3 text-[#bbb]"><use href="#left"/></svg>
      </div>
    </div>
    <div class="flex h-[26px] shrink-0 items-center justify-end gap-2.5 pr-2 text-[#e6e6e6]"><span>行: 0</span><span class="h-3.5 w-px bg-[#ccc]"></span><span>列: 0</span></div>
   </section>
  </div>

  <div class="flex h-[477px] shrink-0 gap-[3px]">
   <!-- shader editor -->
   <section class="flex w-[118px] flex-col overflow-hidden rounded-md bg-[#1d1d1d]" aria-label="着色器编辑器">
    <div class="flex h-[26px] shrink-0 items-center bg-[#1c1c1c] pt-0.5 text-[#e6e6e6]">
      <button class="ml-2.5 flex items-center gap-0.5" aria-label="编辑器类型"><svg class="size-[18px]"><use href="#sphere"/></svg><svg class="size-3"><use href="#chev"/></svg></button>
      <button class="ml-2 flex h-5 flex-1 items-center rounded-l bg-[#232323]"><svg class="ml-1 size-4"><use href="#obj"/></svg><span class="ml-1.5">物体</span></button>
    </div>
    <div class="relative flex-1 overflow-hidden bg-[#141414]">
      <div class="flex items-center bg-[#1d1d1d] pt-[18px] pb-4 text-[#e6e6e6]"><svg class="-ml-1.5 size-3.5"><use href="#right"/></svg><svg class="ml-3 size-4"><use href="#obj"/></svg><svg class="ml-3.5 size-3.5"><use href="#right"/></svg><svg class="-ml-0.5 size-4"><use href="#mesh"/></svg><svg class="ml-4 size-4"><use href="#matprev"/></svg><svg class="ml-1.5 size-3.5"><use href="#left"/></svg></div>
      <div class="absolute top-[50px] right-0 bottom-0 w-2.5 bg-[#222]"></div>
      <span class="absolute top-[57px] left-4 text-[9px] text-[#aaa]">Textures</span>
      <svg class="absolute top-0 left-0" width="118" height="451" viewBox="1 575 118 451"><g stroke="#a2b83a" stroke-width="1.500"><path d="M90 658l29 12M90 769l29-23M90 992l29-5"/></g><rect x="93" y="874" width="26" height="7" fill="#3c3082"/><rect x="92" y="881" width="27" height="49" fill="#242424"/><rect x="93" y="910" width="26" height="9" fill="#444"/><text x="99" y="917" font-size="7" fill="#ccc">1.000</text></svg>
      <div id="shader"></div>
    </div>
   </section>

   <!-- geometry node editor -->
   <section class="flex min-w-0 flex-1 flex-col overflow-hidden rounded-md bg-[#101010]" aria-label="几何节点编辑器">
    <div class="flex h-[26px] shrink-0 items-center bg-[#1c1c1c] pt-0.5 text-[#e6e6e6]">
      <button class="ml-2.5 flex items-center gap-0.5" aria-label="编辑器类型"><svg class="size-[18px]"><use href="#mods"/></svg><svg class="size-3"><use href="#chev"/></svg></button>
      <label class="relative ml-1.5 flex h-5 w-[72px] items-center rounded bg-[#232323]"><select class="absolute inset-0 appearance-none pl-2" aria-label="节点树类型"><option>修改器</option></select><svg class="absolute right-0.5 size-3"><use href="#chev"/></svg></label>
      <button class="ml-3.5">视图</button><button class="ml-[17px]">选择</button><button class="ml-[17px]">添加</button><button class="ml-[17px]">节点</button>
      <button class="ml-[275px] flex h-5 w-[34px] items-center gap-0.5 rounded-l bg-[#232323] pl-1" aria-label="节点组"><svg class="size-4"><use href="#nodetree"/></svg><svg class="size-3"><use href="#chev"/></svg></button>
      <input class="h-5 w-[86px] bg-[#161616] pl-2" value="门.001" aria-label="节点组名称">
      <div class="flex h-5 items-center overflow-hidden rounded-r bg-[#4a4a4a] *:flex *:w-[22px] *:justify-center"><button class="text-[#999]" aria-label="伪用户"><svg class="size-4"><use href="#shield"/></svg></button><button aria-label="复制"><svg class="size-4"><use href="#copy"/></svg></button><button aria-label="断开"><svg class="size-3.5"><use href="#x"/></svg></button></div>
      <svg class="ml-2 size-4 text-[#999]"><use href="#pin"/></svg>
      <button class="ml-auto flex h-5 w-[21px] items-center justify-center rounded bg-[#454545] text-[#999]" aria-label="吸附"><svg class="size-4"><use href="#magnet"/></svg></button>
      <button class="ml-1.5 flex h-5 w-[21px] items-center justify-center rounded-l bg-[#4772b3] text-white" aria-label="叠加层"><svg class="size-4.5"><use href="#overlay"/></svg></button>
      <button class="mr-2 flex h-5 w-[22px] items-center justify-center" aria-label="叠加层选项"><svg class="size-3"><use href="#chev"/></svg></button>
    </div>
    <div class="relative flex min-h-0 flex-1 justify-end">
      <div class="absolute inset-y-0 left-0 w-4 bg-[#1a1a1a]"></div>
      <div class="absolute inset-x-0 top-0 flex items-center pt-[18px] text-[#e6e6e6]"><svg class="-ml-1 size-3.5"><use href="#right"/></svg><svg class="ml-2.5 size-4"><use href="#obj"/></svg><span class="ml-2">Plane.021</span><svg class="ml-4 size-3.5"><use href="#right"/></svg><svg class="ml-2 size-4"><use href="#mods"/></svg><span class="ml-2.5">GeometryNodes</span><svg class="ml-3.5 size-3.5"><use href="#right"/></svg><svg class="ml-2 size-4"><use href="#nodetree"/></svg><span class="ml-2.5">门</span></div>
      <svg class="absolute top-0 left-0" width="1348" height="451" viewBox="122 575 1348 451" fill="none">
        <g stroke="#a8a8a8" stroke-dasharray="5 1"><path d="M250 575v96L454 741M122 705Q250 697 454 694M266 772L346 751L454 762M654 713L1154 817"/></g>
        <path d="M671 870L820 855M950 934L878 1022" stroke="#6f776f"/>
        <path d="M1035 755L1050 900" stroke="#4b4580"/>
        <g stroke="#2bc596" stroke-width="2"><path d="M122 584L454 613M654 630L859 648L1034 699M859 648L820 839M1134 647L1160 656"/></g>
        <circle cx="859" cy="648" r="3" fill="#2bd6a2"/>
        <path d="M250 666l5 5-5 5-5-5zM346 746l5 5-5 5-5-5z" fill="#bdbdbd"/>
      </svg>
      <div id="nodes"></div>
      <div class="absolute top-[172px] right-[319px] h-[66px] w-1 rounded bg-[#2e2e2e]"></div>

      <!-- side bar -->
      <aside class="relative flex w-[288px] flex-col bg-[#3a3a3a] px-[17px]">
        <h2 class="flex h-[34px] items-center gap-1.5 text-white"><svg class="size-3.5"><use href="#chev"/></svg>群组接口<svg class="ml-auto size-3"><use href="#grip"/></svg></h2>
        <div class="mt-[5px] flex gap-2.5">
          <div id="iface" class="relative h-[378px] flex-1 rounded bg-[#2b2b2b] pt-1"></div>
          <div class="-mr-[7px] flex w-5 flex-col">
            <button class="flex size-5 items-center justify-center rounded-t bg-[#252525]" aria-label="添加"><svg class="size-3.5"><use href="#plus"/></svg></button>
            <button class="mt-px flex size-5 items-center justify-center rounded-b bg-[#4f4f4f]" aria-label="移除"><svg class="size-3.5"><use href="#minus"/></svg></button>
            <button class="mt-[9px] flex size-5 items-center justify-center rounded bg-[#252525]" aria-label="更多"><svg class="size-3.5"><use href="#chev"/></svg></button>
          </div>
        </div>
        <label class="relative mt-2 -mr-[7px] flex items-center justify-end">类型<select class="ml-2.5 h-5 w-[151px] appearance-none rounded bg-[#282828] pl-2"><option>浮点</option></select><svg class="absolute right-1 size-3"><use href="#chev"/></svg></label>
      </aside>
      <div class="flex w-[28px] flex-col gap-[5px] bg-[#1a1a1a] pt-[7px] pl-[7px] *:flex *:w-5 *:items-center *:justify-center *:rounded-r *:border *:border-[#343434] *:bg-[#202020] *:[text-orientation:sideways] *:[writing-mode:vertical-rl]">
        <button class="h-[41px] bg-[#3a3a3a]! text-white">群组</button><button class="h-[41px]">节点</button><button class="h-[41px]">工具</button><button class="h-[41px]">视图</button><button class="h-[77px]">节点树仓库</button><button class="h-[65px]">节点牧人</button>
      </div>
    </div>
   </section>
  </div>

  <!-- timeline -->
  <section class="flex h-[26px] shrink-0 items-center rounded bg-[#2b2b2b] pt-px text-[#e6e6e6]" aria-label="时间线">
    <button class="ml-3 flex items-center gap-0.5" aria-label="编辑器类型"><svg class="size-4"><use href="#clock"/></svg><svg class="size-3"><use href="#chev"/></svg></button>
    <button class="ml-3.5 flex items-center gap-1.5">回放<svg class="size-3"><use href="#chev"/></svg></button>
    <button class="ml-2 flex items-center gap-1.5">插帧<svg class="size-3"><use href="#chev"/></svg></button>
    <button class="ml-3">视图</button><button class="ml-[17px]">标记</button>
    <div class="ml-[480px] flex rounded bg-[#4a4a4a] px-1 text-[10px] *:w-5"><button>⏮</button><button>◀</button><button>▶</button><button>⏭</button><button>●</button></div>
    <span class="ml-[204px]">2</span><span class="ml-20">起始 1</span><span class="ml-16">结束 250</span>
  </section>
 </div>

 <div class="flex w-[444px] shrink-0 flex-col gap-[3px]">
  <!-- outliner -->
  <section class="h-[285px] shrink-0 overflow-hidden rounded-md bg-[#282828]" aria-label="大纲视图">
    <div class="flex h-7 items-center pt-0.5 text-[#e6e6e6]">
      <button class="ml-3 flex items-center" aria-label="编辑器类型"><svg class="size-[18px]"><use href="#outl"/></svg><svg class="size-2.5"><use href="#chev"/></svg></button>
      <button class="ml-3 flex items-center" aria-label="显示模式"><svg class="size-4"><use href="#vlayer"/></svg><svg class="size-2.5"><use href="#chev"/></svg></button>
      <label class="relative ml-[70px] flex h-5 w-[128px] items-center rounded bg-[#1d1d1d]"><svg class="ml-1 size-4"><use href="#search"/></svg><input class="absolute inset-0 pl-[27px] placeholder:text-[#6a6a6a]" placeholder="搜索" aria-label="搜索大纲"></label>
      <button class="ml-auto flex items-center gap-0.5" aria-label="过滤"><svg class="size-4"><use href="#funnelo"/></svg><svg class="size-2.5"><use href="#chev"/></svg></button>
      <button class="mr-2 ml-2.5 flex size-5 items-center justify-center rounded bg-[#545454]" aria-label="新建集合"><svg class="size-4"><use href="#newcoll"/></svg></button>
    </div>
    <div id="outliner" class="h-full bg-[repeating-linear-gradient(#282828_0_22px,#2b2b2b_22px_44px)]"></div>
  </section>

  <!-- properties -->
  <section class="flex min-h-0 flex-1 flex-col overflow-hidden rounded-md bg-[#303030]" aria-label="属性">
    <div class="flex h-[26px] shrink-0 items-center text-[#e6e6e6]">
      <button class="ml-3 flex items-center" aria-label="编辑器类型"><svg class="size-[18px]"><use href="#props"/></svg><svg class="size-2.5"><use href="#chev"/></svg></button>
      <label class="relative ml-[122px] flex h-5 w-[126px] items-center rounded bg-[#1d1d1d]"><svg class="ml-1 size-4"><use href="#search"/></svg><input class="absolute inset-0 pl-[27px] placeholder:text-[#6a6a6a]" placeholder="搜索" aria-label="搜索属性"></label>
      <button class="mr-3 ml-auto" aria-label="选项"><svg class="size-3"><use href="#chev"/></svg></button>
    </div>
    <div class="flex min-h-0 flex-1">
      <div id="ptabs" class="flex w-[31px] flex-col bg-[#1d1d1d] pl-1 text-[#b5b5b5]"></div>
      <div class="flex min-w-0 flex-1 flex-col pr-2 pl-2">
        <div class="flex h-[7px] items-end overflow-hidden text-[#aaa]"><svg class="ml-1 size-4"><use href="#obj"/></svg><svg class="ml-[110px] size-4"><use href="#mods"/></svg><svg class="mr-1 ml-auto size-4"><use href="#pin"/></svg></div>
        <button class="relative mt-[18px] h-[21px] shrink-0 rounded bg-[#545454] pl-5 text-[#e6e6e6]"><svg class="absolute top-1 left-1 size-3.5"><use href="#plus"/></svg>添加修改器</button>
        <div id="mod1" class="mt-2.5 h-[237px] shrink-0 rounded bg-[#3a3a3a]"></div>
        <div id="mod2" class="mt-1 flex-1 rounded border border-[#4a5f9a] bg-[#3a3a3a]"></div>
      </div>
    </div>
  </section>
 </div>
</main>

<footer class="flex h-6 shrink-0 items-center justify-between pr-3.5 pl-2.5 text-[#8c8c8c]">
  <span class="flex items-center gap-1.5"><kbd class="rounded border border-[#777] px-1 font-[family-name:Inter] leading-3.5">A</kbd>-<kbd class="rounded border border-[#777] px-1 font-[family-name:Inter] leading-3.5">Z</kbd><span>搜索</span></span>
  <span>内存: 351.8 MIB | 显存: 2.6/4.0 GIB | 4.4.3</span>
</footer>

<!-- add menu -->
<div id="menu" class="absolute top-[360px] left-[454px] w-[200px] rounded border border-[#262626] bg-[#181818] pb-1.5 text-[#dcdcdc] shadow-lg shadow-black/50" role="menu"></div>
<svg class="absolute top-[589px] left-[579px] h-8 w-7" viewBox="0 0 28 32"><defs><linearGradient id="cg" x1="0" y1="0" x2="1" y2="1"><stop offset="0" stop-color="#fff"/><stop offset=".3" stop-color="#c9d6e2"/><stop offset=".5" stop-color="#16426e"/><stop offset="1" stop-color="#1b62ad"/></linearGradient></defs><path d="M1 1L25 18L13 18L8 30z" fill="url(#cg)"/><circle cx="10" cy="16" r="2" fill="none" stroke="#5aa0d8"/></svg>

<!-- key cast overlay -->
<div class="pointer-events-none absolute top-[742px] left-[35px] flex flex-col text-xl leading-6 text-white">
  <span>Left Mouse</span><span>Middle Mouse</span><span>Wheel Down</span><span>Wheel Up</span><span>Shift + A</span>
  <svg class="mt-2 h-11 w-[35px]" viewBox="0 0 35 44" fill="none" stroke="#fff" stroke-width="1.500"><path d="M1 12Q1 1 12 1H23Q34 1 34 12V27a16.500 16.500 0 01-33 0zM1 22H34M12 1V22M23 1V22"/></svg>
  <span class="mt-2.5 h-0.5 w-[103px] bg-white"></span>
  <span class="mt-2">移动并附加 ('node.translate_attach')</span>
</div>

<!-- watermark and subtitle -->
<div class="pointer-events-none absolute top-[1030px] left-2.5 flex items-center gap-3 text-4xl leading-9 font-extrabold text-white/30"><span class="flex size-9 items-center justify-center rounded-md bg-white/25"><svg class="size-6" viewBox="0 0 24 24"><path d="M5 4l7 4v8l8-4-8 8-7-4z" fill="#fff" opacity=".4"/></svg></span>tafe.cc</div>
<p class="pointer-events-none absolute inset-x-0 top-[1001px] text-center font-[family-name:'Noto_Sans_CJK_SC',sans-serif] text-[56px] leading-[70px] font-medium whitespace-nowrap text-white [paint-order:stroke] [-webkit-text-stroke:4px_#1a1a1a]">这样可以让每个面它的这个拐角范围都是0到4。</p>

<script>
const $ = id => document.getElementById(id);
const ic = (n, c = 'size-4') => `<svg class="shrink-0 ${c}"><use href="#${n}"/></svg>`;

// add menu
const groups = [['属性','输入','输出'],['几何数据'],['曲线','实例','网格','点','体积'],['模拟'],['材质','纹理','实用工具'],['群组','布局'],['毛发','法向','修改器','居家','成品','材质辅助','自然环境','自然现象','辅助节点','音乐可视化'],['未分配','点级']];
const sep = '<div class="mx-2.5 flex h-[7px] items-center"><div class="h-px flex-1 bg-[#303030]"></div></div>';
$('menu').innerHTML = `<div class="h-[26px] pt-1.5 pl-[9px] text-[#8f8f8f]">添加</div>${sep.replace('h-[7px]', 'h-[6px]')}
<button class="flex h-[22px] items-center pl-2.5">${ic('search','size-[18px]')}<span class="ml-[7px]">搜索...</span></button>` +
groups.map(g => sep + g.map(t => `<button role="menuitem" class="mx-1 flex h-[22px] w-[190px] items-center justify-between rounded pr-1 pl-[31px] ${t === '体积' ? 'bg-[#3d3d3d] text-white' : ''}">${t}<svg class="size-1.5 text-[#8f8f8f]" viewBox="0 0 6 6"><path d="M0 0l6 3-6 3z" fill="currentColor"/></svg></button>`).join('')).join('');

// spreadsheet domains
const rows = [[0,'mesh','网格'],[1,'vert','顶点',8],[1,'edge','边',8],[1,'face','面',2],[1,'corner','面拐',8],[0,'curve','曲线'],[1,'cpt','控制点',0],[1,'spline','样条线',0],[0,'gp','蜡笔'],[1,'layer','层',0],[0,'cloud','点云'],[1,'cloudp','点',0],[2,'vol','体积栅格',0],[2,'inst','实例',0]];
const head = t => `<div class="flex items-center gap-1.5 bg-[#303030] pl-2.5 text-[#d0d0d0]">${ic('chev','size-3.5')}${t}</div>`;
$('domains').innerHTML = `<div class="grid h-[34px]">${head('几何数据')}</div>
<div class="flex h-[30px] items-center bg-[#2a2a2a]"><button class="ml-2 flex h-5 w-[155px] items-center gap-2.5 rounded bg-[#4772b3] pl-[22px]">${ic('geo')}(几何体)</button></div>
<div class="grid h-[27px]">${head('域')}</div><div class="pt-1.5">` + rows.map(([k, i, t, n]) =>
`<button class="flex h-6 w-full items-center"><span class="ml-2 flex h-5 w-[155px] items-center rounded ${i === 'cloudp' ? 'bg-[#4772b3]' : ''} ${k === 1 ? 'pl-[37px]' : k === 2 ? 'pl-[22px]' : 'pl-1'}">${k === 0 ? ic('chev','mr-1 size-3.5') : ''}${ic(i)}<span class="ml-2.5">${t}</span><span class="mr-1 ml-auto text-[#8a8a8a]">${n ?? ''}</span></span></button>`).join('') +
`</div><div class="absolute top-[132px] left-[19px] h-24 w-px bg-[#444]"></div><div class="absolute top-[251px] left-[19px] h-12 w-px bg-[#444]"></div><div class="absolute top-[323px] left-[19px] h-6 w-px bg-[#444]"></div><div class="absolute right-0.5 bottom-[18px] h-[340px] w-1 rounded bg-[#383838]"></div>`;

// outliner
const vis = (c = 'text-[#e6e6e6]') => `<span class="mr-3 flex gap-[7px] ${c}">${ic('eye')}${ic('photo')}</span>`;
const obj = (i, n, d, w) => `<div class="flex h-[22px] items-center">${ic('right','ml-6.5 mr-2 size-3')}${ic(i,'size-4 text-[#d08747]')}<span class="ml-2 ${w}">${n}</span><span class="flex size-5.5 items-center justify-center rounded ${i === 'camf' ? 'bg-[#505050]' : ''}">${ic(d,'size-4 text-[#22c38f]')}</span><span class="flex-1"></span>${vis()}</div>`;
$('outliner').innerHTML = `<div class="flex h-[22px] items-center gap-2 pl-[25px]">${ic('coll')}场景集合</div>
<div class="flex h-[22px] items-center">${ic('right','ml-6.5 mr-1.5 size-3')}<span class="flex size-5 items-center justify-center rounded bg-[#505050] text-white">${ic('coll')}</span><span class="ml-1.5 text-white">单体</span><span class="relative ml-[22px] flex size-5 items-center justify-center rounded bg-[#505050] text-[#d08747]">${ic('tri')}<span class="absolute -right-1 -bottom-1 text-[11px] text-white">15</span></span><input type="checkbox" checked aria-label="启用单体" class="relative mr-1.5 ml-auto size-[13px] appearance-none bg-white before:absolute before:top-px before:left-1 before:h-2 before:w-1 before:rotate-45 before:border-r-2 before:border-b-2 before:border-[#222]">${vis()}</div>
<div class="flex h-[22px] items-center text-[#777]">${ic('coll','ml-[46px] size-4')}<span class="ml-2">集合2</span><input type="checkbox" aria-label="启用集合2" class="mr-1.5 ml-auto size-[13px] appearance-none border border-[#999]">${vis('text-[#444]')}</div>` +
obj('camf','Camera','cam','w-15') + obj('bulb','Sun.001','sun','w-[63px]') + obj('tri','Suzanne','mesh','w-[63px]');

// properties tabs
const tabs = [['tool',48],['render',29],['output',30],['vlayer',30],['scene',30],['world',30],['collo',46],['obj',30,'text-[#d07a3a]'],['wrench',30,'text-[#6d93e8]'],['parts',30,'text-[#6d7fd0]'],['phys',30,'text-[#6d93e8]'],['constr',30,'text-[#6d93e8]'],['mesh',30,'text-[#22c38f]'],['matprev',30,'text-[#c4506a]']];
$('ptabs').innerHTML = tabs.map(([i, h, c = '']) => `<button aria-label="${i}" class="flex w-[27px] shrink-0 items-center justify-center rounded-l ${i === 'world' ? 'text-[#c4506a]' : c} ${i === 'wrench' ? 'bg-[#303030]' : ''} ${h === 48 ? 'h-[48px]' : h === 46 ? 'h-[46px]' : h === 29 ? 'h-[29px]' : 'h-[30px]'}">${ic(i, 'size-4')}</button>`).join('');

// modifier panels
const mhead = t => `<div class="flex h-[27px] items-center text-[#e6e6e6]">${ic('chev','ml-1.5 size-3.5 text-[#aaa]')}${ic('mods','ml-1 size-4.5')}
<input class="ml-2 h-5 min-w-0 flex-1 rounded-l bg-[#1d1d1d] pl-2" value="${t}" aria-label="修改器名称">
<span class="flex gap-px *:flex *:h-5 *:w-[21px] *:items-center *:justify-center"><button aria-label="编辑框架" class="bg-[#4a4a4a]">${ic('mesh')}</button><button aria-label="编辑模式" class="bg-[#4772b3]">${ic('editm')}</button><button aria-label="实时" class="bg-[#4772b3]">${ic('mon')}</button><button aria-label="渲染" class="bg-[#4772b3] text-white">${ic('photob')}</button><button aria-label="更多" class="rounded-r bg-[#282828]">${ic('chev','size-3.5')}</button></span>
<button aria-label="移除" class="mr-4 ml-1">${ic('x','size-3')}</button>${ic('grip','mr-2 size-3 text-[#bbb]')}</div>`;
const mtree = (t, n) => `<div class="flex h-5 items-center pr-2 pl-2 text-[#e6e6e6]"><button aria-label="节点组" class="flex h-5 w-[34px] items-center gap-0.5 rounded-l bg-[#2b2b2b] pl-1">${ic('nodetree')}${ic('chev','size-3')}</button>
<input class="h-5 min-w-0 flex-1 bg-[#1d1d1d] pl-2" value="${t}" aria-label="节点组名称">${n ? `<button class="mr-px h-5 w-[72px] bg-[#4f4f4f]">${n}</button>` : ''}
<span class="flex gap-px overflow-hidden rounded-r *:flex *:h-5 *:w-[21px] *:items-center *:justify-center *:bg-[#4a4a4a]"><button aria-label="伪用户" class="text-[#888]">${ic('shield')}</button><button aria-label="复制">${ic('copy')}</button><button aria-label="断开">${ic('x','size-3')}</button></span></div>`;
let uid = 0;
const row = (l, v, o = {}) => { const id = 'f' + uid++; const btn = o.btn;
  const body = o.color ? `<input id="${id}" type="button" aria-label="${l}" class="h-5 w-[186px] rounded ${o.color}">`
    : o.off ? `<select id="${id}" disabled class="h-5 w-[186px] appearance-none rounded bg-[#2e2e2e]"></select>`
    : `<input id="${id}" value="${v}" class="w-[186px] bg-[#545454] text-center text-[#e6e6e6] ${o.join ? 'h-[21px]' : 'h-5 rounded'}">`;
  return `<div class="flex items-center justify-end ${o.join ? 'h-[22px]' : 'h-[27px]'}"><label for="${id}" class="mr-[11px] ${o.off ? 'text-[#777]' : 'text-[#e0e0e0]'}">${l}</label>${body}<span class="flex h-5 w-[22px] items-center justify-center">${btn ? `<button aria-label="属性切换" class="ml-0.5 flex size-5 items-center justify-center bg-[#505050] text-white">${ic('sheet','size-4.5')}</button>` : ''}</span><span class="mr-[17px] ml-2.5 size-1 rounded-full ${o.off ? 'bg-[#555]' : 'bg-[#e6e6e6]'}"></span></div>`; };
const sub = (i, t) => `<div class="flex h-[27px] items-center gap-2 pl-3 text-[#e6e6e6]">${ic(i,'size-3.5')}${t}</div>`;
$('mod1').innerHTML = mhead('外墙') + `<div class="h-2.5"></div>` + mtree('墙面','13') + `<div class="h-[3px]"></div>` + row('X轴长度','6.62 m') + row('高度','2 m') + row('单位间隔','1.000') + `<div class="h-[3px]"></div>` + row('旋转 X','-90°',{join:1}) + row('Y','0°',{join:1}) + row('Z','0°',{join:1}) + `<div class="h-0.5"></div>` + sub('right','管理');
const b = {btn:1};
$('mod2').innerHTML = mhead('GeometryNodes') + `<div class="h-[9px]"></div>` + mtree('门.001') + `<div class="h-1"></div>` + row('左右墙壁','0.090',b) + row('上墙壁','0.225',b) + sub('chev','平开门') +
`<div class="mt-[3px] bg-[#343434] pt-px">` + row('开关','0.000',b) + row('开门类型','',{off:1}) + row('边框半径','0.090',b) + row('边框厚度','0.100',b) + row('门的厚度','0.050',b) + row('门把手','',{btn:1,color:'bg-[#402d28]'}) + row('门颜色','',{btn:1,color:'bg-[#dd8d35]'}) + row('门框颜色','',{btn:1,color:'bg-[#4f302d]'}) + `</div>` + sub('right','管理');

// group interface
const items = [['几何数据','',0],['几何数据','bg-[#1ee6a5]',0],['左右墙壁','bg-[#a1a1a1]',0],['上墙壁','bg-[#a1a1a1]',0],['平开门','',2],['开关','bg-[#a1a1a1]',1],['开门类型','bg-[#666]',1],['边框半径','bg-[#a1a1a1]',1],['边框厚度','bg-[#a1a1a1]',1],['门的厚度','bg-[#a1a1a1]',1],['门把手','bg-[#c0d838]',1],['门颜色','bg-[#c0d838]',1],['门框颜色','bg-[#c0d838]',1]];
$('iface').innerHTML = items.map(([t, c, k], n) => `<button class="flex h-6 w-full items-center pl-[5px]"><span class="flex h-5 w-[212px] items-center rounded ${n === 9 ? 'bg-[#4772b3]' : ''} ${k === 1 ? 'pl-10' : k === 0 ? 'pl-[25px]' : 'pl-1'}">${k === 2 ? ic('chev','mr-1.5 size-3.5') : `<span class="mr-2 size-[9px] rounded-full ${c}"></span>`}${t}${n === 0 ? '<span class="mr-2.5 ml-auto size-[9px] rounded-full bg-[#1ee6a5]"></span>' : ''}</span></button>`).join('') +
`<div class="absolute top-[124px] left-[17px] h-[190px] w-px bg-[#555]"></div><div class="absolute inset-x-0 bottom-1 flex justify-center">${ic('grip','size-3 text-[#bbb]')}</div>`;

// nodes on the geometry canvas; x and y are canvas positions
const at = (x, y, w, h) => `style="left:${x}px;top:${y}px;width:${w}px;height:${h}px"`;
const dd = t => `<div class="mx-2 mb-0.5 flex h-3.5 items-center justify-between rounded-sm border border-[#3a3a3a] bg-[#282828] px-1">${t}${ic('chev','size-2')}</div>`;
const line = (t, c = '', r) => `<div class="relative flex h-[15px] items-center px-2 ${r ? 'justify-end' : ''}"><span class="absolute size-1.5 rotate-45 ${r ? '-right-[3px]' : '-left-[3px]'} ${c}"></span>${t}</div>`;
const node = (x, y, w, h, hc, title, body, extra = '') => `<div class="absolute rounded-sm bg-[#2e2e2e] text-[8px] leading-3 text-[#e0e0e0] ${extra}" ${at(x - 122, y - 575, w, h)}><div class="flex h-[15px] items-center gap-1 rounded-t-sm px-1.5 ${hc}">${title}</div>${body}</div>`;
const T = t => ic('chev','size-2.5') + t;
const G = 'bg-[#1ee6a5] rounded-full', V = 'bg-[#6a5fc8]', N = 'bg-[#a1a1a1]';
const fld = t => `<div class="mb-px h-[13px] bg-[#4f4f4f] text-center">${t}</div>`;
const uv = `<div class="relative mx-2 my-0.5 h-3 rounded-sm bg-[#1d1d1d] pl-1">UV<span class="absolute top-0.5 -left-3 size-[7px] rounded-full bg-[#8ab4f0]"></span></div>`;
$('nodes').innerHTML = [
 node(165,746,101,38,'bg-[#1e1e1e]',T('组输入'),`<div class="pt-0.5">${line('门的厚度',N,1)}</div>`,'border border-[#b8472a]'),
 node(384,859,80,68,'bg-[#86214d]',T('面内拐角偏移'),`<div class="flex justify-end pt-0.5 pr-2.5">拐角</div><div class="pt-0.5">${line('拐角编号','bg-[#6f856f]')}</div><div class="mx-2 mt-0.5 h-3 bg-[#4f4f4f] pl-3">偏移量</div>`),
 `<div class="absolute flex items-center gap-1.5 rounded-t bg-[#1c1c1c] pl-1 text-[8px]" ${at(92,396,97,15)}>${ic('timer','size-2.5')}&lt; 0.1 ms</div>`,
 node(213,986,99,45,'bg-[#35521f] justify-between',`<span class="flex items-center gap-1">${T('g-面的一边')}</span>${ic('nodetree','size-2.5')}`,line('边编号','bg-[#6f856f]',1)+line('选中边',N,1)),
 node(361,1021,60,20,'bg-[#86214d]',T(''),''),
 node(620,845,50,104,'bg-[#246283]','',`<div class="pt-0.5">${line('值',N,1)}</div><div class="flex justify-end pt-1 pr-2">${ic('chev','size-2')}</div><div class="mt-8 mr-2 h-3 bg-[#4f4f4f]"></div>`),
 node(820,797,100,68,'bg-[#3f1c2e]',T('预览器')+ic('eye','ml-auto size-2.5'),`<div class="pt-1">${dd('自动')}${line('几何数据',G)}${line('值','bg-[#6f856f]')}</div>`),
 node(1038,568,99,31,'bg-[#2e2e2e]','',uv),
 `<div class="absolute flex items-center gap-1.5 rounded-t bg-[#1c1c1c] pl-1 text-[8px]" ${at(913,33,100,16)}>${ic('timer','size-2.5')}&lt; 0.1 ms</div>`,
 node(1034,622,100,135,'bg-[#24204a]',T('存储已命名属性'),`<div class="pt-0.5">${line('几何数据',G,1)}</div><div class="pt-1.5">${dd('二维矢量')}${dd('面拐')}</div>${line('几何数据',G)}${line('选中项',N)}${uv}${line('值',V)}`),
 node(950,875,100,160,'bg-[#246283]',T('编号切换'),`<div class="pt-0.5">${line('输出',V,1)}</div><div class="pt-1">${dd('矢量')}</div>${line('编号','bg-[#6f856f]')}${line('0',V)}<div class="mx-2 mt-0.5">${fld('0.000')}${fld('0.000')}${fld('0.000')}</div>${line('1',V)}<div class="mx-2">${fld('1.000')}</div>`),
].join('');

// texture nodes on the shader canvas
$('shader').innerHTML = ['Base Color','Roughness','Normal','Displacement'].map((t, n) => `<div class="absolute rounded-sm bg-[#2c2c2c] text-[6px] leading-[10px] text-[#ccc]" ${at(0, 70 + n * 111, 89, 105)}><div class="h-[7px] bg-[#7a4420] pl-1 leading-[7px]">✓ ${t}</div>
<div class="flex flex-col items-end pt-0.5 pr-1.5 leading-[9px]"><span>颜色</span><span>Alpha</span></div><span class="absolute top-2.5 -right-1 size-1 rounded-full bg-[#c0d838]"></span><span class="absolute top-5 -right-1 size-1 rounded-full bg-[#999]"></span>
<div class="mt-1 flex h-2 items-center justify-between bg-[#222] pr-1 leading-[8px]"><span class="pl-0.5">▣ ⌄ wooden_g...</span><span class="bg-[#444] px-0.5">2 ♡ ❐ ▤ ×</span></div>
${['线性','平展','重复','单张图像'].map(x => `<div class="flex justify-between px-0.5 pr-1">${x}${ic('chev','size-1.5')}</div>`).join('')}<div class="flex justify-between px-0.5 pr-11"><span>色彩空间</span><span>sRGB</span></div><div class="flex justify-between px-0.5 pr-11"><span>Alpha</span><span>直通</span></div><div class="px-0.5">矢量</div></div>`).join('');
</script>
</body>
</html>
